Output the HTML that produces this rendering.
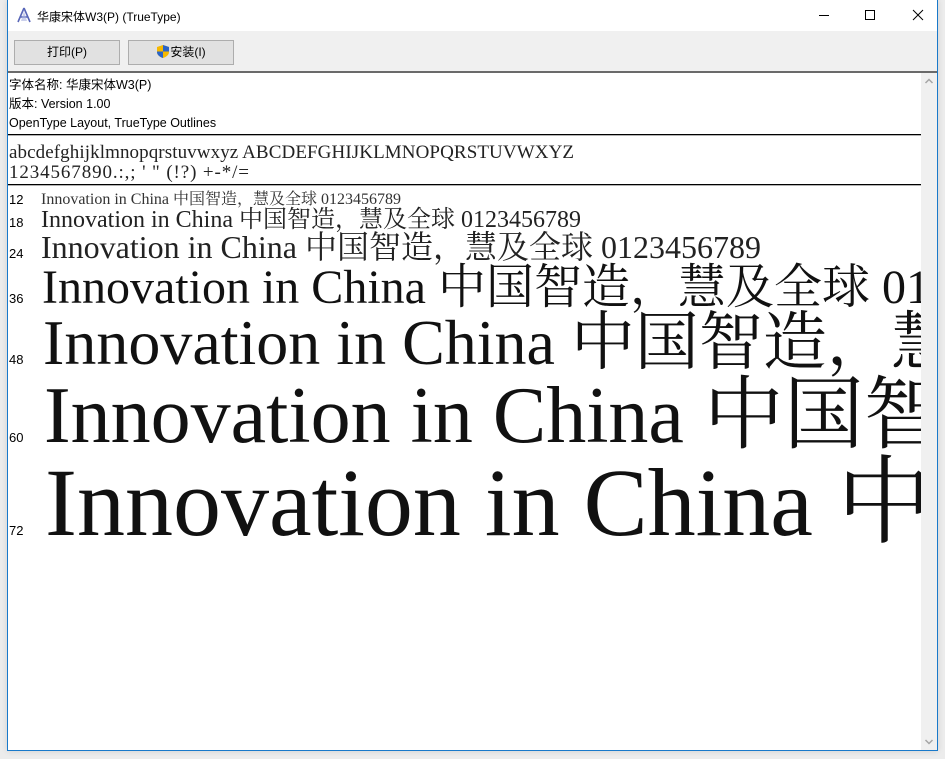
<!DOCTYPE html>
<html><head><meta charset="utf-8"><style>
html,body{margin:0;padding:0;width:945px;height:759px;overflow:hidden;background:#ececec;font-family:"Liberation Sans","Noto Sans CJK SC",sans-serif;}
#win{position:absolute;left:7px;top:0;width:929px;height:750px;border:1px solid #1979ca;border-top:none;background:#fff;box-shadow:0 0 6px rgba(0,0,0,.12);overflow:hidden}
#title{position:absolute;left:0;top:0;width:929px;height:31px;background:#fff}
#title .t{position:absolute;left:29px;top:8px;font-size:12px;color:#000}
#tb{position:absolute;left:0;top:31px;width:929px;height:40px;background:#f0f0f0;border-bottom:2px solid #6a6a6a}
.btn{position:absolute;top:9px;height:23px;width:104px;background:#e1e1e1;border:1px solid #adadad;font-size:12px;text-align:center;line-height:23px;color:#000}
#sb{position:absolute;left:913px;top:73px;width:16px;height:677px;background:#f0f0f0}
</style></head><body>
<div id="win">
 <div id="title">
  <svg style="position:absolute;left:8px;top:7px" width="16" height="16" viewBox="0 0 16 16"><path d="M8 1 L2 15 M8 1 L14 15 M4.5 10 H11.5" stroke="#5866b8" stroke-width="1.6" fill="none"/><path d="M8 4 L5 14 H11Z" fill="#a9b0e0" opacity=".6"/></svg>
  <div class="t">华康宋体W3(P) (TrueType)</div>
  <svg style="position:absolute;left:810px;top:8px" width="110" height="14"><path d="M1 7.5 H11" stroke="#000"/><rect x="47.5" y="2.5" width="9" height="9" fill="none" stroke="#000"/><path d="M95 2 L105 12 M105 2 L95 12" stroke="#000"/></svg>
 </div>
 <div id="tb">
  <div class="btn" style="left:6px">打印(P)</div>
  <div class="btn" style="left:120px"><svg width="14" height="15" viewBox="0 0 14 15" style="vertical-align:-3px"><path d="M7 1 L13 3 V8 C13 11 10 13 7 14 C4 13 1 11 1 8 V3Z" fill="#f5b800"/><path d="M7 1 L13 3 V7.5 H7Z M7 7.5 H1 V8 C1 11 4 13 7 14Z" fill="#2a64c8"/></svg>安装(I)</div>
 </div>
 <svg style="position:absolute;left:0;top:73px" width="913" height="677" viewBox="0 73 913 677" font-family="'Liberation Serif','Noto Serif CJK SC',serif">
  <g font-family="'Liberation Sans','Noto Sans CJK SC',sans-serif" font-size="12.5" fill="#000">
   <text x="1" y="89">字体名称: 华康宋体W3(P)</text>
   <text x="1" y="108">版本: Version 1.00</text>
   <text x="1" y="127">OpenType Layout, TrueType Outlines</text>
  </g>
  <rect x="0" y="134" width="913" height="1.3" fill="#000"/>
  <text x="1" y="158" font-size="19" textLength="565" fill="#222">abcdefghijklmnopqrstuvwxyz ABCDEFGHIJKLMNOPQRSTUVWXYZ</text>
  <text x="1" y="178" font-size="19" textLength="240" fill="#222">1234567890.:,; ' " (!?) +-*/=</text>
  <rect x="0" y="184" width="913" height="1.3" fill="#000"/>
  <g font-family="'Liberation Sans',sans-serif" font-size="13" fill="#000">
   <text x="1" y="204">12</text><text x="1" y="227">18</text><text x="1" y="258">24</text><text x="1" y="303">36</text><text x="1" y="364">48</text><text x="1" y="442">60</text><text x="1" y="535">72</text>
  </g>
  <g fill="#111">
   <text x="33" y="204" font-size="16" fill="#333">Innovation in China 中国智造，慧及全球 0123456789</text>
   <text x="33" y="227" font-size="24" fill="#222">Innovation in China 中国智造，慧及全球 0123456789</text>
   <text x="33" y="258" font-size="32" fill="#222">Innovation in China 中国智造，慧及全球 0123456789</text>
   <text x="34" y="303" font-size="48">Innovation in China 中国智造，慧及全球 0123456789</text>
   <text x="35" y="364" font-size="64">Innovation in China 中国智造，慧及全球</text>
   <text x="36" y="442" font-size="80">Innovation in China 中国智造</text>
   <text x="37" y="535" font-size="96">Innovation in China 中国</text>
  </g>
 </svg>
 <div id="sb">
  <svg width="16" height="677"><path d="M4.5 10 L8 6.5 L11.5 10" stroke="#a6a6a6" stroke-width="1.5" fill="none"/><path d="M4.5 667 L8 670.5 L11.5 667" stroke="#a6a6a6" stroke-width="1.5" fill="none"/></svg>
 </div>
</div>
</body></html>
